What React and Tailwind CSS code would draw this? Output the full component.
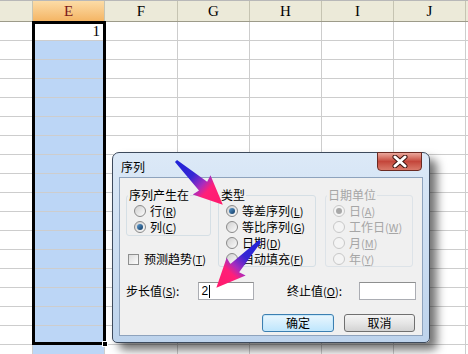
import React from "react";

const cjk = "font-['SimSun','Noto_Sans_CJK_SC',sans-serif]";

function Radio({ checked, disabled }) {
  return (
    <span
      className={
        "relative inline-flex items-center justify-center w-[12px] h-[12px] rounded-full border shrink-0 " +
        (disabled
          ? "border-[#c8c8c8] bg-[#f4f4f4]"
          : "border-[#8a8a8a] bg-gradient-to-br from-[#d0d0d0] to-[#fbfbfb]")
      }
    >
      {checked && (
        <span
          className={
            "w-[6px] h-[6px] rounded-full " +
            (disabled ? "bg-[#a8a8a8]" : "bg-gradient-to-br from-[#5f9ed3] to-[#0f3a63]")
          }
        />
      )}
    </span>
  );
}

function Opt({ label, k, checked, disabled }) {
  return (
    <div className={"flex items-center h-[16px] gap-[4px] " + (disabled ? "text-[#a6a6a6]" : "text-black")}>
      <Radio checked={checked} disabled={disabled} />
      <span className="text-[12px] leading-[12px] whitespace-nowrap">
        {label}
        <span className="text-[11px]">(<u>{k}</u>)</span>
      </span>
    </div>
  );
}

const colW = ["w-[33px]", "w-[72px]", "w-[73px]", "w-[72px]", "w-[72px]", "w-[72px]", "w-[72px]", "w-[20px]"];
const headers = ["", "E", "F", "G", "H", "I", "J", ""];

export default function App() {
  const rows = Array.from({ length: 18 });
  return (
    <div className={"relative w-[468px] h-[354px] overflow-hidden bg-white " + cjk}>
      {/* Column header */}
      <div className="flex h-[22px] border-t border-b border-t-[#b8b8b8] border-b-[#9d9b8a] bg-[#ecead9]">
        {headers.map((h, i) => (
          <div
            key={i}
            className={
              colW[i] +
              " shrink-0 box-border border-r border-[#c6c4b2] flex items-center justify-center font-['Liberation_Serif',serif] text-[15px] " +
              (h === "E" ? "bg-gradient-to-b from-[#fcdca6] to-[#f4b564] text-[#7c1a1a]" : "text-black")
            }
          >
            {h}
          </div>
        ))}
      </div>
      {/* Rows */}
      {rows.map((_, r) => (
        <div key={r} className="flex h-[19px] border-b border-[#cdcdcd]">
          {colW.map((w, c) => (
            <div
              key={c}
              className={
                w +
                " shrink-0 box-border border-r border-[#cdcdcd] " +
                (c === 1 ? (r === 0 ? "bg-white" : "bg-[#bcd6f6]") : "bg-white")
              }
            >
              {c === 1 && r === 0 && (
                <div className="text-right pr-[4px] font-['Liberation_Serif',serif] text-[15px] leading-[18px]">1</div>
              )}
            </div>
          ))}
        </div>
      ))}

      {/* Selection border */}
      <div className="absolute left-[32px] top-[21px] w-[74px] h-[324px] border-[3px] border-black" />
      <div className="absolute left-[102px] top-[341px] w-[6px] h-[6px] bg-black border border-white" />

      {/* Dialog */}
      <div className="absolute left-[112px] top-[152px] w-[318px] h-[191px] rounded-t-[7px] rounded-b-[5px] border border-[#3d4a5c] bg-gradient-to-b from-[#dce9f7] to-[#bdd3ec] shadow-[7px_7px_10px_rgba(0,0,0,0.55)]">
        <div className="h-[24px] flex items-center pt-[4px] pl-[8px] text-[12px] text-black">序列</div>
        {/* close */}
        <div className="absolute right-[7px] top-[-1px] w-[45px] h-[19px] rounded-b-[4px] border border-[#6b2a22] bg-gradient-to-b from-[#e9a79c] via-[#c4463b] to-[#d9796a] flex items-center justify-center">
          <svg width="16" height="13" viewBox="0 0 16 13">
            <path d="M3 2 L13 11 M13 2 L3 11" stroke="#3b1410" strokeWidth="5" strokeLinecap="round" />
            <path d="M3 2 L13 11 M13 2 L3 11" stroke="#ffffff" strokeWidth="3" strokeLinecap="round" />
          </svg>
        </div>
        {/* client */}
        <div className="mx-[6px] h-[159px] border border-[#8ea3bd] bg-[#f0f0f0] px-[6px] pt-[11px] text-[12px]">
          <div className="flex">
            <div className="w-[85px] flex flex-col">
              <fieldset className="border border-[#d5dfe5] rounded-[3px] h-[47px] pl-[7px] pt-[2px]">
                <legend className="ml-[-6px] px-[1px] text-[12px] leading-[12px]">序列产生在</legend>
                <Opt label="行" k="R" />
                <Opt label="列" k="C" checked />
              </fieldset>
              <div className="flex items-center gap-[5px] mt-[16px] ml-[2px]">
                <span className="w-[11px] h-[11px] border border-[#8e8f8f] bg-gradient-to-br from-[#dcdcdc] to-[#fdfdfd]" />
                <span className="text-[12px] leading-[14px] whitespace-nowrap">
                  预测趋势<span className="text-[11px]">(<u>T</u>)</span>
                </span>
              </div>
            </div>
            <fieldset className="ml-[7px] w-[98px] h-[78px] border border-[#d5dfe5] rounded-[3px] pl-[7px] pt-[2px]">
              <legend className="ml-[-6px] px-[1px] text-[12px] leading-[12px]">类型</legend>
              <Opt label="等差序列" k="L" checked />
              <Opt label="等比序列" k="G" />
              <Opt label="日期" k="D" />
              <Opt label="自动填充" k="F" />
            </fieldset>
            <fieldset className="ml-[9px] w-[88px] h-[78px] border border-[#dde3e8] rounded-[3px] pl-[7px] pt-[2px]">
              <legend className="ml-[-6px] px-[1px] text-[12px] leading-[12px] text-[#a6a6a6]">日期单位</legend>
              <Opt label="日" k="A" checked disabled />
              <Opt label="工作日" k="W" disabled />
              <Opt label="月" k="M" disabled />
              <Opt label="年" k="Y" disabled />
            </fieldset>
          </div>
          <div className="flex items-center mt-[15px] h-[18px]">
            <span className="w-[73px] whitespace-nowrap">
              步长值<span className="text-[11px]">(<u>S</u>)</span>:
            </span>
            <div className="w-[56px] h-[18px] border border-[#abadb3] border-t-[#8e8f8f] bg-white flex items-center pl-[2px] font-['Liberation_Sans',sans-serif] text-[12px]">
              2<span className="w-[1px] h-[13px] bg-black ml-[1px]" />
            </div>
            <span className="ml-[33px] w-[73px] whitespace-nowrap">
              终止值<span className="text-[11px]">(<u>O</u>)</span>:
            </span>
            <div className="w-[57px] h-[18px] border border-[#abadb3] border-t-[#8e8f8f] bg-white" />
          </div>
          <div className="flex justify-end gap-[10px] mt-[14px] pr-[1px]">
            <div className="w-[72px] h-[18px] rounded-[3px] border border-[#3c7fb1] bg-gradient-to-b from-[#eaf6fd] to-[#bee6fd] shadow-[inset_0_0_0_1px_#c7e8fa] flex items-center justify-center">
              确定
            </div>
            <div className="w-[71px] h-[18px] rounded-[3px] border border-[#707070] bg-gradient-to-b from-[#f4f4f4] via-[#e6e6e6] to-[#d3d3d3] flex items-center justify-center">
              取消
            </div>
          </div>
        </div>
      </div>

      {/* Arrows */}
      <svg className="absolute left-0 top-0 pointer-events-none" width="468" height="354">
        <defs>
          <linearGradient id="ag" gradientUnits="userSpaceOnUse" x1="0" y1="0" x2="64" y2="0">
            <stop offset="0" stopColor="#1f22d8" />
            <stop offset="0.34" stopColor="#3526d4" />
            <stop offset="0.55" stopColor="#a82cbe" />
            <stop offset="0.68" stopColor="#ff1f78" />
            <stop offset="1" stopColor="#ff1a6c" />
          </linearGradient>
        </defs>
        <g transform="translate(176,161) rotate(43)">
          <polygon points="0,-1.5 37,-6 35,-13 64,0 35,13 37,6 0,1.5" fill="url(#ag)" />
        </g>
        <g transform="translate(260,241) rotate(133)">
          <polygon points="0,-1.5 37,-6 35,-13 64,0 35,13 37,6 0,1.5" fill="url(#ag)" />
        </g>
      </svg>
    </div>
  );
}
